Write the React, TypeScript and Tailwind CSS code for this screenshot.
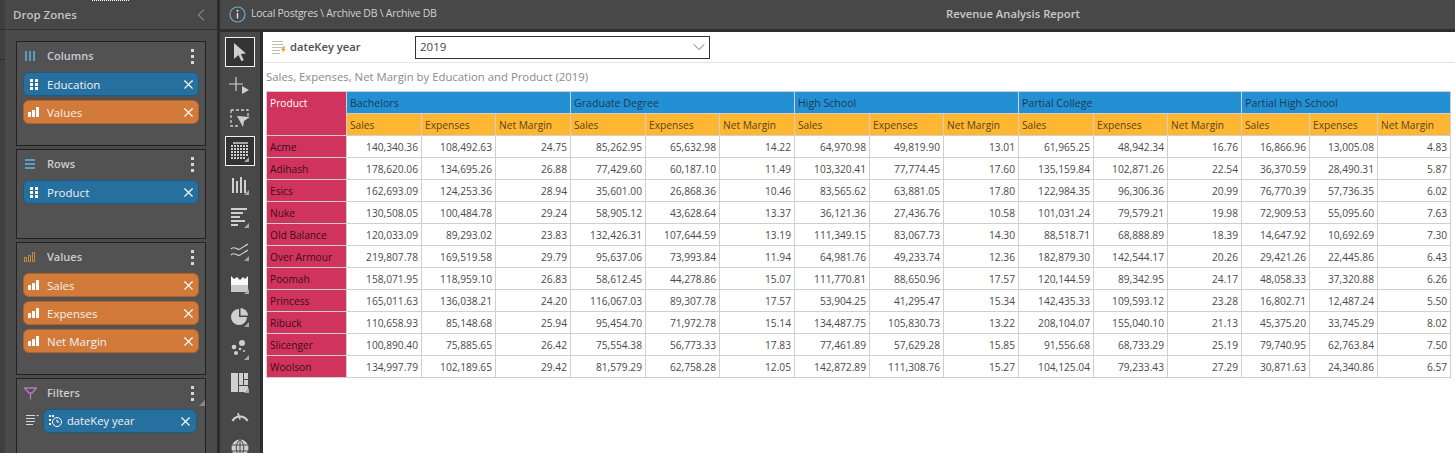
import React from 'react';
import { X, ChevronLeft, ChevronDown } from 'lucide-react';

const groups = ['Bachelors', 'Graduate Degree', 'High School', 'Partial College', 'Partial High School'];
const colWidths = [75, 74, 75, 75, 74, 75, 75, 74, 75, 75, 74, 74, 68, 68, 73];

const rows: [string, string[]][] = [
  ['Acme', ['140,340.36', '108,492.63', '24.75', '85,262.95', '65,632.98', '14.22', '64,970.98', '49,819.90', '13.01', '61,965.25', '48,942.34', '16.76', '16,866.96', '13,005.08', '4.83']],
  ['Adihash', ['178,620.06', '134,695.26', '26.88', '77,429.60', '60,187.10', '11.49', '103,320.41', '77,774.45', '17.60', '135,159.84', '102,871.26', '22.54', '36,370.59', '28,490.31', '5.87']],
  ['Esics', ['162,693.09', '124,253.36', '28.94', '35,601.00', '26,868.36', '10.46', '83,565.62', '63,881.05', '17.80', '122,984.35', '96,306.36', '20.99', '76,770.39', '57,736.35', '6.02']],
  ['Nuke', ['130,508.05', '100,484.78', '29.24', '58,905.12', '43,628.64', '13.37', '36,121.36', '27,436.76', '10.58', '101,031.24', '79,579.21', '19.98', '72,909.53', '55,095.60', '7.63']],
  ['Old Balance', ['120,033.09', '89,293.02', '23.83', '132,426.31', '107,644.59', '13.19', '111,349.15', '83,067.73', '14.30', '88,518.71', '68,888.89', '18.39', '14,647.92', '10,692.69', '7.30']],
  ['Over Armour', ['219,807.78', '169,519.58', '29.79', '95,637.06', '73,993.84', '11.94', '64,981.76', '49,233.74', '12.36', '182,879.30', '142,544.17', '20.26', '29,421.26', '22,445.86', '6.43']],
  ['Poomah', ['158,071.95', '118,959.10', '26.83', '58,612.45', '44,278.86', '15.07', '111,770.81', '88,650.96', '17.57', '120,144.59', '89,342.95', '24.17', '48,058.33', '37,320.88', '6.26']],
  ['Princess', ['165,011.63', '136,038.21', '24.20', '116,067.03', '89,307.78', '17.57', '53,904.25', '41,295.47', '15.34', '142,435.33', '109,593.12', '23.28', '16,802.71', '12,487.24', '5.50']],
  ['Ribuck', ['110,658.93', '85,148.68', '25.94', '95,454.70', '71,972.78', '15.14', '134,487.75', '105,830.73', '13.22', '208,104.07', '155,040.10', '21.13', '45,375.20', '33,745.29', '8.02']],
  ['Slicenger', ['100,890.40', '75,885.65', '26.42', '75,554.38', '56,773.33', '17.83', '77,461.89', '57,629.28', '15.85', '91,556.68', '68,733.29', '25.19', '79,740.95', '62,763.84', '7.50']],
  ['Woolson', ['134,997.79', '102,189.65', '29.42', '81,579.29', '62,758.28', '12.05', '142,872.89', '111,308.76', '15.27', '104,125.04', '79,233.43', '27.29', '30,871.63', '24,340.86', '6.57']],
];

function Corner() {
  return <path d="M21 23v-5l-5 5z" fill="#a8a8a8" />;
}

function Tool({ children, active }: { children: React.ReactNode; active?: boolean }) {
  return (
    <div className={`w-[30px] h-[30px] shrink-0 flex items-center justify-center ${active ? 'border border-[#f2f2f2] bg-[#333333]' : ''}`}>
      <svg width="24" height="24" viewBox="0 0 24 24">
        {children}
      </svg>
    </div>
  );
}

const grey = '#cfcfcf';

function Toolbar() {
  return (
    <div className="w-[40px] shrink-0 bg-[#484848] flex flex-col items-center gap-[3px] pt-[5px] overflow-hidden">
      <Tool active>
        <path d="M6 3l12 10.5-5.2.6 3 6-2.4 1.2-2.9-6.2L6 19z" fill={grey} />
      </Tool>
      <Tool>
        <path d="M8 4v14M1 11h14" stroke={grey} strokeWidth="1.2" fill="none" />
        <path d="M14 13l7 4-7 4z" fill={grey} />
      </Tool>
      <Tool>
        <path d="M3 4h17v6M3 4v16h9" stroke={grey} strokeWidth="1.3" strokeDasharray="3 2" fill="none" />
        <path d="M9 10l13 1-6 4-1 6z" fill={grey} />
      </Tool>
      <Tool active>
        <path d="M5 4h15" stroke={grey} strokeWidth="1.5" />
        <path d="M3 7h17M3 10h17M3 13h17M3 16h17M3 19h14" stroke={grey} strokeWidth="2" strokeDasharray="2 1" />
        <Corner />
      </Tool>
      <Tool>
        <path d="M4 6h2v15H4zM8 9h2v12H8zM12 5h2v16h-2zM16 8h2v13h-2z" fill={grey} />
        <Corner />
      </Tool>
      <Tool>
        <path d="M3 3h16v2H3zM3 7h12v2H3zM3 11h9v2H3zM3 15h14v2H3zM3 19h7v2H3z" fill={grey} />
        <Corner />
      </Tool>
      <Tool>
        <path d="M3 11c4-4 6 2 9 0s5-3 8-5M3 17c4-4 6 2 9 0s5-3 8-5" stroke={grey} strokeWidth="1.2" fill="none" />
        <Corner />
      </Tool>
      <Tool>
        <path d="M3 5l3 3 3-2 3 3 3-3 2 2 3-3v9H3z" fill="#f8f8f8" />
        <path d="M3 14h17v7H3z" fill="#c8c8c8" />
        <Corner />
      </Tool>
      <Tool>
        <path d="M11 5a8 8 0 1 0 8 8h-8z" fill={grey} />
        <path d="M12.5 4a8 8 0 0 1 7.5 7.5h-7.5z" fill={grey} />
        <Corner />
      </Tool>
      <Tool>
        <circle cx="14" cy="6" r="3" fill={grey} />
        <circle cx="6" cy="10" r="2.3" fill={grey} />
        <circle cx="8" cy="16" r="2" fill={grey} />
        <circle cx="12" cy="12" r="1.3" fill={grey} />
        <circle cx="16" cy="14" r="1" fill={grey} />
        <Corner />
      </Tool>
      <Tool>
        <path d="M3 3h7v19H3zM11 3h4v12h-4zM16 3h4v6h-4zM16 10h4v5h-4zM11 16h9v6h-9z" fill={grey} />
        <Corner />
      </Tool>
      <Tool>
        <path d="M4.5 18a8.5 8.5 0 0 1 15 0" stroke={grey} strokeWidth="2.2" fill="none" />
        <path d="M9 10.5l1.8-.6 2 6.6-1.3.6z" fill={grey} />
      </Tool>
      <Tool>
        <circle cx="12" cy="12" r="8.5" fill={grey} />
        <path d="M3.5 9h17M3.5 15h17M12 3.5v17M12 3.5c-5 4-5 13 0 17M12 3.5c5 4 5 13 0 17" stroke="#484848" strokeWidth="1" fill="none" />
      </Tool>
    </div>
  );
}

function Grid() {
  return (
    <svg width="12" height="13" viewBox="0 0 12 13" className="shrink-0">
      <path d="M2 1h3v3H2zM7 1h3v3H7zM2 5h3v3H2zM7 5h3v3H7zM2 9h3v3H2zM7 9h3v3H7z" fill="white" />
    </svg>
  );
}

function Bars() {
  return (
    <svg width="12" height="12" viewBox="0 0 12 12" className="shrink-0">
      <path d="M0 6h3v5H0zM4 4h3v7H4zM8 1h3v10H8z" fill="white" />
    </svg>
  );
}

function Chip({ label, kind }: { label: string; kind: 'blue' | 'orange' }) {
  return (
    <div
      className={`h-[24px] rounded-[6px] border flex items-center pl-[4px] pr-[2px] gap-[7px] text-[#f1f1f1] ${
        kind === 'blue' ? 'bg-[#26709f] border-[#1d5a85]' : 'bg-[#d27a3a] border-[#b4622c]'
      }`}
    >
      {kind === 'blue' ? <Grid /> : <Bars />}
      <span className="flex-1 text-[11.5px] pt-[1px]">{label}</span>
      <X size={15} strokeWidth={1.7} color="white" />
    </div>
  );
}

function Zone({
  title,
  icon,
  height,
  corner,
  children,
}: {
  title: string;
  icon: React.ReactNode;
  height: string;
  corner?: boolean;
  children: React.ReactNode;
}) {
  return (
    <div className={`relative ${height} shrink-0 border border-[#222222] bg-[#525252] px-[6px]`}>
      {corner && (
        <svg width="6" height="6" viewBox="0 0 6 6" className="absolute top-[21px] right-0">
          <path d="M6 0v6H0z" fill="#8a8a8a" />
        </svg>
      )}
      <div className="h-[30px] flex items-center pb-[2px]">
        <div className="w-[24px] pl-[1px] flex items-center">{icon}</div>
        <span className="flex-1 text-[11px] font-semibold text-[#c9ced4]">{title}</span>
        <div className="flex flex-col gap-[3px] mr-[5px]">
          <div className="w-[3px] h-[3px] bg-[#d8d8d8]" />
          <div className="w-[3px] h-[3px] bg-[#d8d8d8]" />
          <div className="w-[3px] h-[3px] bg-[#d8d8d8]" />
        </div>
      </div>
      <div className="flex flex-col gap-[4px]">{children}</div>
    </div>
  );
}

function DropZones() {
  return (
    <div className="relative w-[212px] shrink-0 bg-[#4a4a4a] flex flex-col overflow-hidden">
      <div className="absolute top-0 left-[87px] w-[37px] border-t border-dotted border-white" />
      <div className="h-[30px] shrink-0 bg-[#484848] border-b border-[#333333] flex items-center justify-between pl-[8px] pr-[6px]">
        <span className="text-[11.5px] font-semibold text-[#bfc4c9] pt-[1px]">Drop Zones</span>
        <ChevronLeft size={20} strokeWidth={1.1} color="#b5b5b5" />
      </div>
      <div className="px-[11px] pt-[11px] flex flex-col gap-[3px]">
        <Zone
          title="Columns"
          height="h-[105px]"
          icon={
            <svg width="12" height="12" viewBox="0 0 12 12">
              <path d="M1 1h2v10H1zM5 1h2v10H5zM9 1h2v10H9z" fill="#5b9bc7" />
            </svg>
          }
        >
          <Chip label="Education" kind="blue" />
          <Chip label="Values" kind="orange" />
        </Zone>
        <Zone
          title="Rows"
          height="h-[90px]"
          icon={
            <svg width="12" height="12" viewBox="0 0 12 12">
              <path d="M1 1h10v2H1zM1 5h10v2H1zM1 9h10v2H1z" fill="#5b9bc7" />
            </svg>
          }
        >
          <Chip label="Product" kind="blue" />
        </Zone>
        <Zone
          title="Values"
          height="h-[133px]"
          icon={
            <svg width="12" height="12" viewBox="0 0 12 12">
              <path d="M.5 6.5h2v4h-2zM4.5 4.5h2v6h-2zM8.5 1.5h2v9h-2z" fill="none" stroke="#c98b3a" />
            </svg>
          }
        >
          <Chip label="Sales" kind="orange" />
          <Chip label="Expenses" kind="orange" />
          <Chip label="Net Margin" kind="orange" />
        </Zone>
        <Zone
          title="Filters"
          height="h-[120px]"
          corner
          icon={
            <svg width="13" height="13" viewBox="0 0 13 13">
              <path d="M.5 1h12L8 6H5zM6.5 6v6.5" fill="none" stroke="#b77ac0" strokeWidth="1.3" />
            </svg>
          }
        >
          <div className="flex items-center">
            <svg width="21" height="14" viewBox="0 0 21 14" className="shrink-0">
              <path d="M3 1.5h9M3 4.5h9M3 7.5h9M3 10.5h7" stroke="#d8d8d8" fill="none" />
              <path d="M13 1h3l-1.5 1.6z" fill="#d8d8d8" />
            </svg>
            <div className="flex-1 h-[24px] ml-[-1px] mr-[2px] rounded-[6px] border border-[#1d5a85] bg-[#26709f] flex items-center pl-[5px] pr-[3px] gap-[4px] text-[#f1f1f1]">
              <svg width="14" height="14" viewBox="0 0 14 14" className="shrink-0">
                <path d="M0 1h2v2H0zM3 1h2v2H3zM0 5h2v2H0zM0 9h2v2H0z" fill="white" />
                <circle cx="8" cy="8" r="4.5" fill="none" stroke="white" />
                <path d="M8 5.5V8h2" fill="none" stroke="white" />
              </svg>
              <span className="flex-1 text-[11.2px] pt-[1px]">dateKey year</span>
              <X size={15} strokeWidth={1.7} color="white" />
            </div>
          </div>
        </Zone>
      </div>
    </div>
  );
}

function ReportTable() {
  const cell = 'border border-[#cfcfcf] h-[22px] p-0 px-[3px] pt-[2px] text-[10.2px] font-normal text-left whitespace-nowrap';
  return (
    <table className="table-fixed border-collapse w-[1184px]">
      <colgroup>
        <col className="w-[80px]" />
        {colWidths.map((w, i) => (
          <col key={i} style={{ width: w }} />
        ))}
      </colgroup>
      <thead>
        <tr>
          <th rowSpan={2} className={`${cell} align-top !pt-[4px] bg-[#d0345c] !text-white !font-medium`}>
            Product
          </th>
          {groups.map((g) => (
            <th key={g} colSpan={3} className={`${cell} bg-[#2490d4] text-[#1c3a55] !text-[10.6px]`}>
              {g}
            </th>
          ))}
        </tr>
        <tr>
          {groups.map((g) =>
            ['Sales', 'Expenses', 'Net Margin'].map((h) => (
              <th key={g + h} className={`${cell} bg-[#ffb732] text-[#5a4320]`}>
                {h}
              </th>
            ))
          )}
        </tr>
      </thead>
      <tbody>
        {rows.map(([name, vals]) => (
          <tr key={name}>
            <td className={`${cell} bg-[#d0345c] text-[#3d0c1d]`}>{name}</td>
            {vals.map((v, i) => (
              <td key={i} className={`${cell} text-right text-[#4a4a4a]`}>
                {v}
              </td>
            ))}
          </tr>
        ))}
      </tbody>
    </table>
  );
}

function Report() {
  return (
    <div className="flex-1 bg-white flex flex-col min-w-0">
      <div className="h-[31px] shrink-0 border-b border-[#e5e5e5] flex items-center pl-[9px]">
        <svg width="15" height="14" viewBox="0 0 15 14" className="shrink-0">
          <path d="M0 1.5h11M0 4.5h11M0 7.5h11M0 10.5h8M0 13.5h8" stroke="#bdbdbd" fill="none" />
          <path d="M12 6l-3 4h2l-1 3 4-4h-2l1-3z" fill="#f0a020" />
        </svg>
        <span className="ml-[3px] w-[125px] text-[11.2px] font-semibold text-[#4f4f4f]">dateKey year</span>
        <div className="w-[295px] h-[23px] border border-[#333333] flex items-center justify-between pl-[4px] text-[11.5px] text-[#444444]">
          <span>2019</span>
          <ChevronDown size={20} strokeWidth={1} color="#555555" />
        </div>
      </div>
      <div className="h-[28px] shrink-0 flex items-center pl-[3px] pb-[1px] text-[11.35px] text-[#8a8a8a]">
        Sales, Expenses, Net Margin by Education and Product (2019)
      </div>
      <div className="pl-[3px]">
        <ReportTable />
      </div>
    </div>
  );
}

export default function App() {
  return (
    <div className="w-[1455px] h-[453px] flex overflow-hidden bg-[#303030] font-['Open_Sans',sans-serif]">
      <div className="w-[5px] shrink-0 bg-[#3f3f3f] flex flex-col">
        <div className="h-[30px] border-b border-[#2e2e2e]" />
        <div className="h-[30px] border-b border-[#2e2e2e]" />
      </div>
      <DropZones />
      <div className="w-[3px] shrink-0 bg-[#2c2c2c]" />
      <div className="flex-1 flex flex-col min-w-0">
        <div className="h-[29px] shrink-0 bg-[#484848] flex items-center pl-[9px]">
          <svg width="17" height="17" viewBox="0 0 17 17" className="shrink-0">
            <circle cx="8.5" cy="8.5" r="7.5" fill="none" stroke="#6fa9d0" strokeWidth="1.2" />
            <path d="M8.5 7v5.5" stroke="#e6e6e6" strokeWidth="1.4" />
            <circle cx="8.5" cy="4.8" r="1" fill="#e6e6e6" />
          </svg>
          <span className="ml-[5px] w-[350px] pb-[1px] text-[10.5px] tracking-[-0.25px] text-[#cdd2d6]">Local Postgres \ Archive DB \ Archive DB</span>
          <span className="ml-[345px] text-[11.25px] font-semibold text-[#c6c9cc]">Revenue Analysis Report</span>
        </div>
        <div className="h-[3px] shrink-0 bg-[#2e2e2e]" />
        <div className="flex-1 flex min-h-0">
          <Toolbar />
          <div className="w-[3px] shrink-0 bg-[#2e2e2e]" />
          <Report />
        </div>
      </div>
    </div>
  );
}
